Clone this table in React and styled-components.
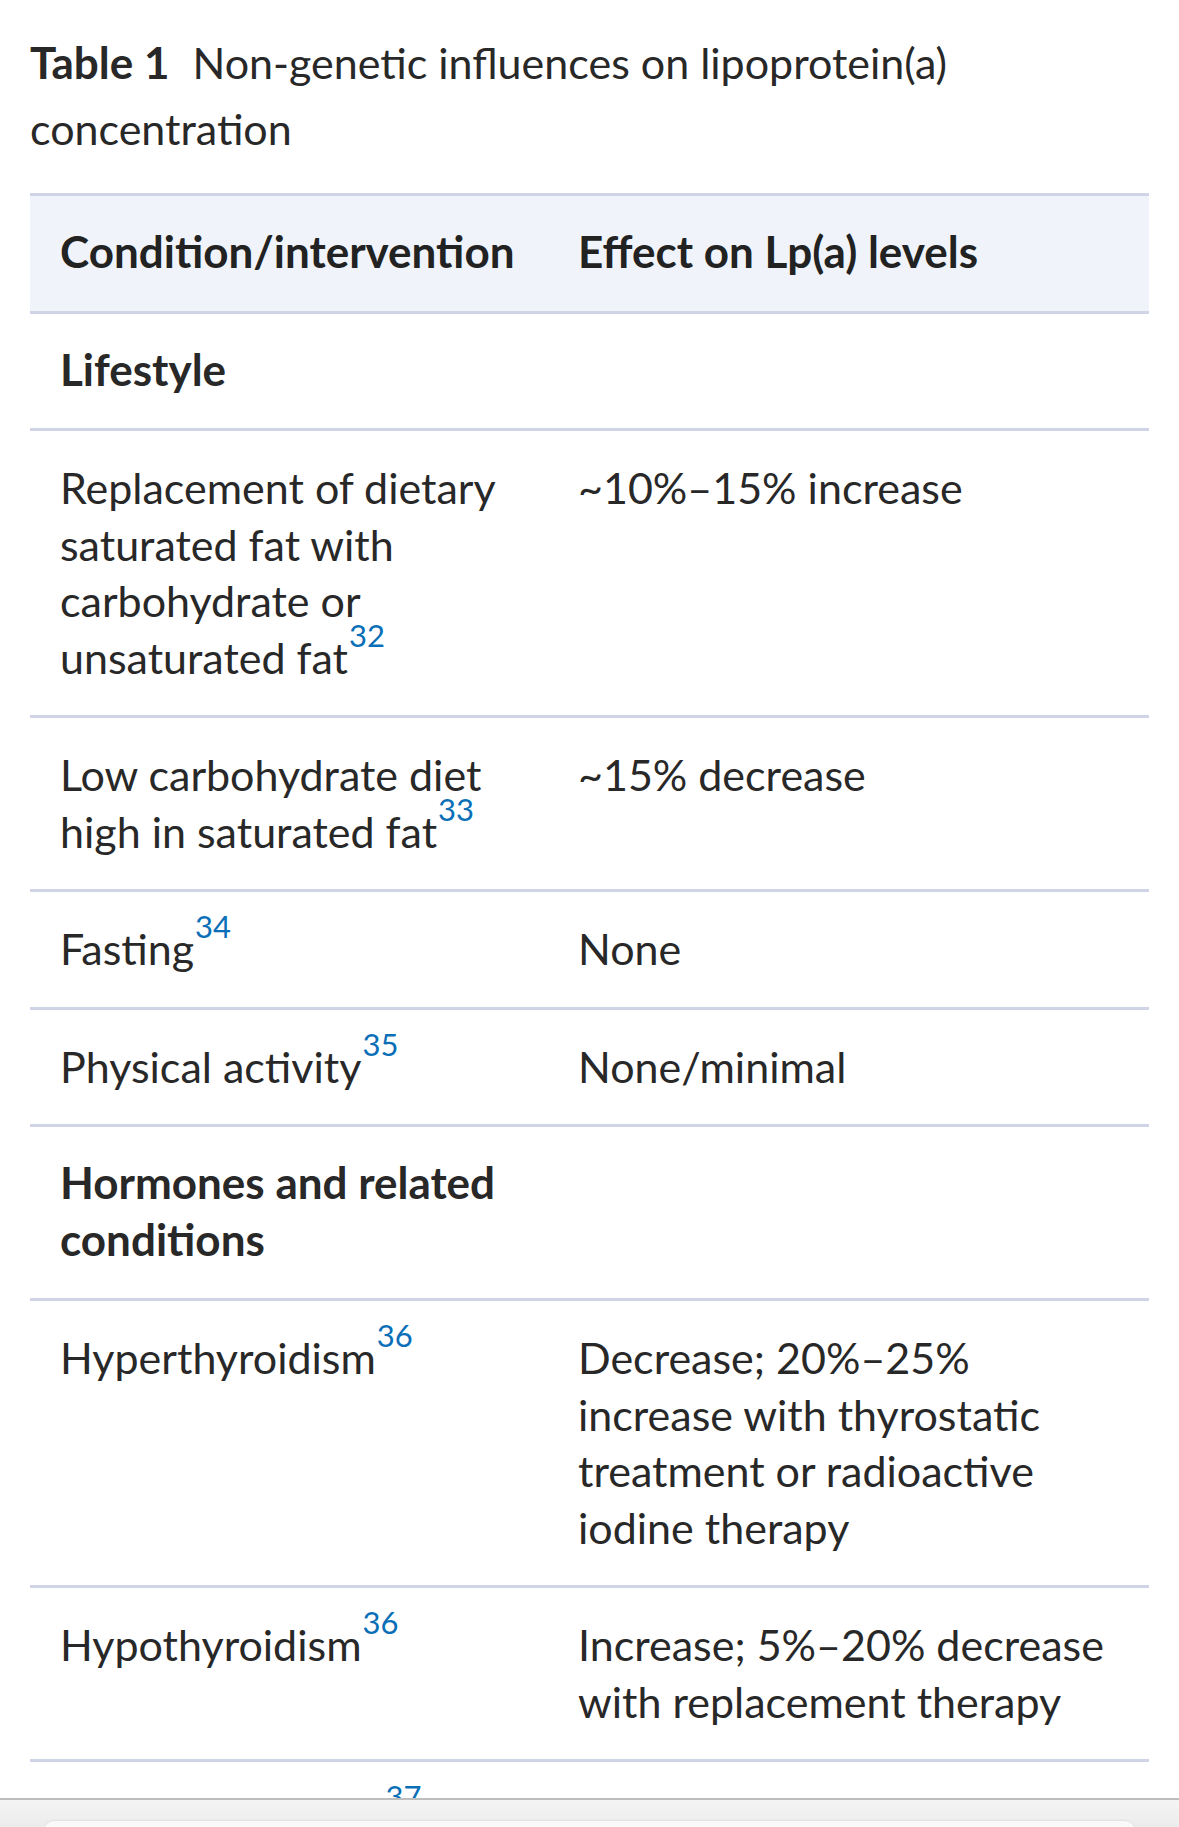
import React from "react";
import styled, { createGlobalStyle } from "styled-components";

// Global reset

const GlobalStyle = createGlobalStyle`
  html, body {
    margin: 0;
    padding: 0;
    background: #ffffff;
  }
  body {
    font-family: Lato, "Noto Sans", "Liberation Sans", sans-serif;
    color: #282828;
    overflow: hidden;
  }
`;

// Styled components

const Page = styled.div`
  padding: 29px 30px 0;
`;

const Caption = styled.div`
  font-size: 43px;
  line-height: 66px;
  margin-bottom: 31px;
  color: #282828;
`;

const CaptionLabel = styled.span`
  font-weight: 700;
  font-size: 44px;
  margin-right: 23px;
`;

const Table = styled.table`
  width: 100%;
  border-collapse: collapse;
  border-spacing: 0;
  table-layout: fixed;
  font-size: 43px;
  line-height: 56.5px;
`;

const Col = styled.col`
  width: ${(props) => props.width || "auto"};
`;

const HeadRow = styled.tr`
  background: #f0f4fa;
  border-top: 3px solid #cfd4e6;
  border-bottom: 3px solid #cfd4e6;
`;

const HeadCell = styled.th`
  text-align: left;
  font-weight: 700;
  font-size: 44px;
  white-space: nowrap;
  padding: 27px 30px 31px;
  vertical-align: top;
  color: #222;
`;

const Row = styled.tr`
  border-bottom: 3px solid #cfd4e6;
`;

// section rows are bold and sit a touch higher, like the header
const Cell = styled.td`
  padding: ${(props) => (props.section ? "27px 30px 31px" : "29px 30px")};
  vertical-align: top;
  font-weight: ${(props) => (props.section ? 700 : 400)};
  font-size: ${(props) => (props.section ? "44px" : "43px")};
  color: #282828;
`;

const Ref = styled.sup`
  font-size: 31px;
  line-height: 0;
  vertical-align: 27px;
  color: #0a6fb7;
  margin-left: 1px;
`;

const BrowserBar = styled.div`
  position: fixed;
  left: 0;
  right: 0;
  bottom: 0;
  height: 27px;
  border-top: 2px solid #bdbdbd;
  background: linear-gradient(#f4f4f4, #ececec);
`;

const BarPill = styled.div`
  position: absolute;
  left: 44px;
  right: 44px;
  bottom: -14px;
  height: 20px;
  border-radius: 14px;
  background: #f9f9f9;
  box-shadow: 0 -1px 2px rgba(0, 0, 0, 0.06);
`;

const rows = [
  { section: "Lifestyle" },
  {
    condition: "Replacement of dietary saturated fat with carbohydrate or unsaturated fat",
    ref: "32",
    effect: "~10%–15% increase",
  },
  {
    condition: "Low carbohydrate diet high in saturated fat",
    ref: "33",
    effect: "~15% decrease",
  },
  { condition: "Fasting", ref: "34", effect: "None" },
  { condition: "Physical activity", ref: "35", effect: "None/minimal" },
  { section: "Hormones and related conditions" },
  {
    condition: "Hyperthyroidism",
    ref: "36",
    effect:
      "Decrease; 20%–25% increase with thyrostatic treatment or radioactive iodine therapy",
  },
  {
    condition: "Hypothyroidism",
    ref: "36",
    effect: "Increase; 5%–20% decrease with replacement therapy",
  },
  { condition: "Growth hormone", ref: "37", effect: "Increase" },
];

export default function App() {
  return (
    <>
      <GlobalStyle />
      <Page>
        <Caption>
          <CaptionLabel>Table 1</CaptionLabel>
          Non-genetic influences on lipoprotein(a) concentration
        </Caption>
        <Table>
          <colgroup>
            <Col width="518px" />
            <Col />
          </colgroup>
          <thead>
            <HeadRow>
              <HeadCell>Condition/intervention</HeadCell>
              <HeadCell>Effect on Lp(a) levels</HeadCell>
            </HeadRow>
          </thead>
          <tbody>
            {rows.map((row, i) =>
              row.section ? (
                <Row key={i}>
                  <Cell section>{row.section}</Cell>
                  <Cell />
                </Row>
              ) : (
                <Row key={i}>
                  <Cell>
                    {row.condition}
                    <Ref>{row.ref}</Ref>
                  </Cell>
                  <Cell>{row.effect}</Cell>
                </Row>
              )
            )}
          </tbody>
        </Table>
      </Page>
      <BrowserBar>
        <BarPill />
      </BrowserBar>
    </>
  );
}
